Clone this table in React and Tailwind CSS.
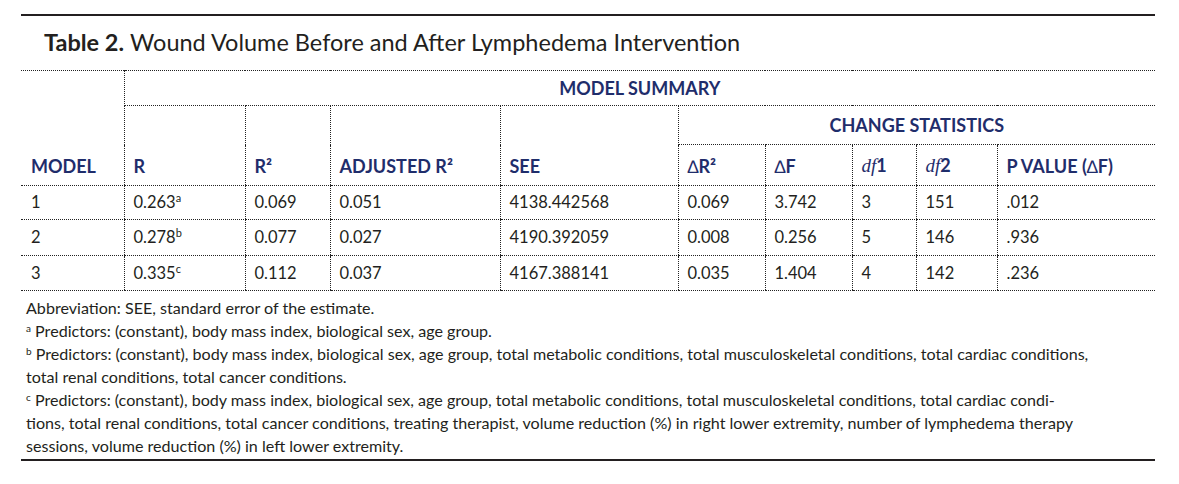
import React from 'react';

const navy = 'text-[#1f2d6b]';

const rows = [
  { model: '1', r: '0.263', sup: 'a', r2: '0.069', adj: '0.051', see: '4138.442568', dr2: '0.069', df: '3.742', df1: '3', df2: '151', p: '.012' },
  { model: '2', r: '0.278', sup: 'b', r2: '0.077', adj: '0.027', see: '4190.392059', dr2: '0.008', df: '0.256', df1: '5', df2: '146', p: '.936' },
  { model: '3', r: '0.335', sup: 'c', r2: '0.112', adj: '0.037', see: '4167.388141', dr2: '0.035', df: '1.404', df1: '4', df2: '142', p: '.236' },
];

const widths = [103, 121, 85, 170, 178, 87, 87, 64, 81, 158];

function Df({ n }) {
  return (
    <span>
      <span className="italic font-normal text-[19px]" style={{ fontFamily: '"Liberation Serif", serif' }}>df</span>
      <span>{n}</span>
    </span>
  );
}

function Delta() {
  return <span className="font-normal">∆</span>;
}

export default function App() {
  const th = `text-left align-bottom pb-[5px] pl-[9px] font-bold text-[18px] ${navy} border-l border-dotted border-[#222]`;
  const td = 'pl-[9px] border-l border-b border-dotted border-[#222]';

  return (
    <div className="w-[1179px] h-[484px] bg-white text-[#231f20]" style={{ fontFamily: 'Lato, "Liberation Sans", sans-serif' }}>
      <div className="ml-[21px] w-[1134px] pt-[14px]">
        <div className="border-t-2 border-[#231f20]" />
        <div className="h-[54px] pl-[23px] flex items-center text-[23.5px]">
          <span className="font-bold mr-[6px]">Table 2.</span>
          <span>Wound Volume Before and After Lymphedema Intervention</span>
        </div>

        <table className="w-full table-fixed border-collapse">
          <colgroup>
            {widths.map((w, i) => (
              <col key={i} style={{ width: w }} />
            ))}
          </colgroup>
          <thead>
            <tr className="h-[35px] border-t border-dotted border-[#222]">
              <th rowSpan={3} className={`${th} border-l-0 pl-[10px] border-b`}>MODEL</th>
              <th colSpan={9} className={`text-center font-bold text-[18px] ${navy} border-l border-b border-dotted border-[#222]`}>
                MODEL SUMMARY
              </th>
            </tr>
            <tr className="h-[39px]">
              <th rowSpan={2} className={`${th} border-b`}>R</th>
              <th rowSpan={2} className={`${th} border-b`}>R²</th>
              <th rowSpan={2} className={`${th} border-b`}>ADJUSTED R²</th>
              <th rowSpan={2} className={`${th} border-b`}>SEE</th>
              <th colSpan={5} className={`text-center font-bold text-[18px] ${navy} border-l border-b border-dotted border-[#222]`}>
                CHANGE STATISTICS
              </th>
            </tr>
            <tr className="h-[41px]">
              <th className={`${th} border-b`}><Delta />R²</th>
              <th className={`${th} border-b`}><Delta />F</th>
              <th className={`${th} border-b`}><Df n="1" /></th>
              <th className={`${th} border-b`}><Df n="2" /></th>
              <th className={`${th} border-b`}>P VALUE (<Delta />F)</th>
            </tr>
          </thead>
          <tbody className="text-[16.5px]">
            {rows.map((r, i) => (
              <tr key={r.model} className={i === 1 ? 'h-[36px]' : i === 0 ? 'h-[34px]' : 'h-[35px]'}>
                <td className={`${td} border-l-0 pl-[10px]`}>{r.model}</td>
                <td className={td}>
                  {r.r}
                  <span className="text-[11px] relative -top-[6px]">{r.sup}</span>
                </td>
                <td className={td}>{r.r2}</td>
                <td className={td}>{r.adj}</td>
                <td className={td}>{r.see}</td>
                <td className={td}>{r.dr2}</td>
                <td className={td}>{r.df}</td>
                <td className={td}>{r.df1}</td>
                <td className={td}>{r.df2}</td>
                <td className={td}>{r.p}</td>
              </tr>
            ))}
          </tbody>
        </table>

        <div className="pl-[5px] pt-[5px] pb-[2px] text-[16.1px] leading-[23px] whitespace-nowrap">
          <div>Abbreviation: SEE, standard error of the estimate.</div>
          <div><sup className="text-[10px]">a</sup> Predictors: (constant), body mass index, biological sex, age group.</div>
          <div><sup className="text-[10px]">b</sup> Predictors: (constant), body mass index, biological sex, age group, total metabolic conditions, total musculoskeletal conditions, total cardiac conditions,</div>
          <div>total renal conditions, total cancer conditions.</div>
          <div><sup className="text-[10px]">c</sup> Predictors: (constant), body mass index, biological sex, age group, total metabolic conditions, total musculoskeletal conditions, total cardiac condi-</div>
          <div>tions, total renal conditions, total cancer conditions, treating therapist, volume reduction (%) in right lower extremity, number of lymphedema therapy</div>
          <div>sessions, volume reduction (%) in left lower extremity.</div>
        </div>
        <div className="border-t-2 border-[#231f20]" />
      </div>
    </div>
  );
}
